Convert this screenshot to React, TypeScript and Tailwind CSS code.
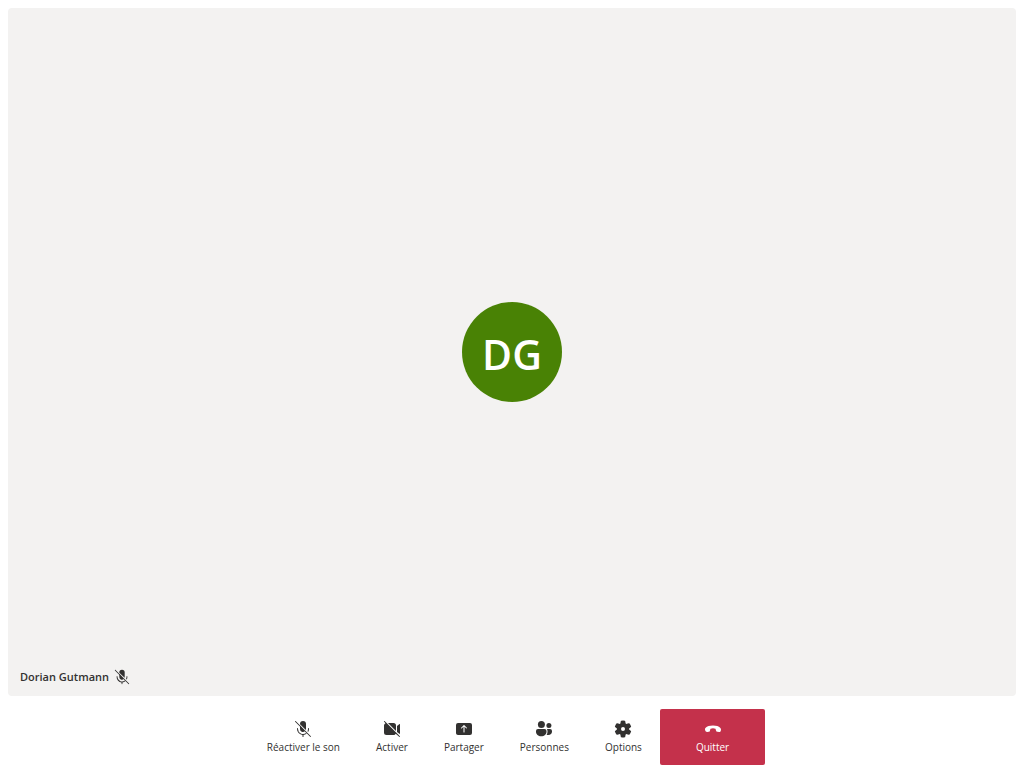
import type { ReactNode } from 'react';

function MicOffIcon({ className }: { className: string }) {
  return (
    <svg viewBox="0 0 20 20" className={className} fill="currentColor" aria-hidden="true">
      <path d="M13 10c0 .3-.05.62-.13.9L7 5.2V5a3 3 0 0 1 6 0v5Z" />
      <path d="M7 6.6V10a3 3 0 0 0 4.9 2.33L7 6.6Z" />
      <path d="M5 9.5a.5.5 0 0 0-1 0v.5a6 6 0 0 0 5.5 5.98v1.52a.5.5 0 0 0 1 0v-1.52a5.97 5.97 0 0 0 3.26-1.38l-.7-.7A5 5 0 0 1 5 10v-.5ZM15.2 12.9l-.74-.74c.35-.64.54-1.37.54-2.16v-.5a.5.5 0 0 1 1 0v.5c0 1.06-.3 2.06-.8 2.9Z" />
      <path d="M2.15 2.15c.2-.2.5-.2.7 0l15 15a.5.5 0 0 1-.7.7l-15-15a.5.5 0 0 1 0-.7Z" />
    </svg>
  );
}

function CameraOffIcon() {
  return (
    <svg viewBox="0 0 20 20" className="size-5" fill="currentColor" aria-hidden="true">
      <path d="M2.85 2.15a.5.5 0 1 0-.7.7l1.34 1.35A2.5 2.5 0 0 0 2 6.5v7A2.5 2.5 0 0 0 4.5 16h7c.96 0 1.8-.54 2.22-1.34l3.43 3.2a.5.5 0 0 0 .7-.71l-15-15Z" />
      <path d="M14 12.02 5.98 4h5.52A2.5 2.5 0 0 1 14 6.5v5.52Zm3.7 3L15 13.02V6.93l2.2-1.8a.5.5 0 0 1 .8.4v8.99c0 .2-.12.4-.3.5Z" />
    </svg>
  );
}

function ShareIcon() {
  return (
    <svg viewBox="0 0 20 20" className="size-5" fill="currentColor" aria-hidden="true">
      <path
        fillRule="evenodd"
        d="M4 4a2 2 0 0 0-2 2v8c0 1.1.9 2 2 2h12a2 2 0 0 0 2-2V6a2 2 0 0 0-2-2H4Zm6 9.5a.5.5 0 0 1-.5-.5V7.7L7.85 9.35a.5.5 0 1 1-.7-.7l2.5-2.5c.2-.2.5-.2.7 0l2.5 2.5a.5.5 0 0 1-.7.7L10.5 7.7V13a.5.5 0 0 1-.5.5Z"
      />
    </svg>
  );
}

function PeopleIcon() {
  return (
    <svg viewBox="0 0 20 20" className="size-5" fill="currentColor" aria-hidden="true">
      <circle cx="7.4" cy="5.4" r="3.5" />
      <circle cx="14.9" cy="6.6" r="2.5" />
      <path d="M4 10a2 2 0 0 0-2 2v.7c0 2.5 2.2 4.5 5.25 4.5s5.25-2 5.25-4.5V12a2 2 0 0 0-2-2H4Z" />
      <path d="M12.9 10c.4.55.6 1.24.6 2v.7c0 1.3-.33 2.3-.9 3.1.5.15 1.1.2 1.7.2 2.3 0 3.7-1.5 3.7-3.5V12a2 2 0 0 0-2-2h-3.1Z" />
    </svg>
  );
}

function SettingsIcon() {
  return (
    <svg viewBox="0 0 20 20" className="size-5" fill="currentColor" aria-hidden="true">
      <path
        fillRule="evenodd"
        d="M1.91 7.38A8.5 8.5 0 0 1 3.7 4.3a.5.5 0 0 1 .54-.13l1.92.68a1 1 0 0 0 1.32-.76l.36-2a.5.5 0 0 1 .4-.4 8.53 8.53 0 0 1 3.55 0c.2.04.35.2.38.4l.37 2a1 1 0 0 0 1.32.76l1.92-.68a.5.5 0 0 1 .54.13 8.5 8.5 0 0 1 1.78 3.08c.06.2 0 .4-.15.54l-1.56 1.32a1 1 0 0 0 0 1.52l1.56 1.32a.5.5 0 0 1 .15.54 8.5 8.5 0 0 1-1.78 3.08.5.5 0 0 1-.54.13l-1.92-.68a1 1 0 0 0-1.32.76l-.37 2a.5.5 0 0 1-.38.4 8.53 8.53 0 0 1-3.56 0 .5.5 0 0 1-.39-.4l-.36-2a1 1 0 0 0-1.32-.76l-1.92.68a.5.5 0 0 1-.54-.13 8.5 8.5 0 0 1-1.78-3.08.5.5 0 0 1 .15-.54l1.56-1.32a1 1 0 0 0 0-1.52L2.06 7.92a.5.5 0 0 1-.15-.54ZM8 10a2 2 0 1 0 4 0 2 2 0 0 0-4 0Z"
      />
    </svg>
  );
}

function HangUpIcon() {
  return (
    <svg viewBox="0 0 20 20" className="size-5" fill="currentColor" aria-hidden="true">
      <path d="m17.96 10.94-.16.83c-.15.78-.87 1.29-1.7 1.21l-1.63-.16c-.72-.07-1.25-.59-1.47-1.33-.3-1-.5-1.75-.5-1.75A6.5 6.5 0 0 0 10 9.25a6.3 6.3 0 0 0-2.5.49s-.21.75-.5 1.75c-.2.67-.5 1.26-1.2 1.33l-1.63.16c-.81.08-1.6-.43-1.83-1.2l-.25-.84c-.25-.83-.04-1.68.56-2.23C4.08 7.39 6.59 6.5 9.99 6.5c3.4 0 5.75.89 7.16 2.2.59.56.96 1.41.81 2.24Z" />
    </svg>
  );
}

const actions: { label: string; icon: ReactNode }[] = [
  { label: 'Réactiver le son', icon: <MicOffIcon className="size-5" /> },
  { label: 'Activer', icon: <CameraOffIcon /> },
  { label: 'Partager', icon: <ShareIcon /> },
  { label: 'Personnes', icon: <PeopleIcon /> },
  { label: 'Options', icon: <SettingsIcon /> },
];

export default function App() {
  return (
    <div className="flex min-h-screen flex-col bg-white font-['Segoe_UI','Open_Sans',sans-serif] text-[#323130]">
      <main className="flex flex-1 p-2 pb-0">
        <section
          aria-label="Dorian Gutmann"
          className="grid flex-1 grid-rows-[1fr_auto_1fr] rounded-sm bg-[#f3f2f1]"
        >
          <div className="row-start-2 flex size-25 items-center justify-center justify-self-center rounded-full bg-[#498205] pt-1 text-[41px] leading-none font-semibold text-white">
            DG
          </div>
          <div className="row-start-3 flex items-center gap-1 self-end px-3 pb-2.5 text-[11px] leading-[18px] font-semibold">
            <span>Dorian Gutmann</span>
            <MicOffIcon className="size-[18px]" />
          </div>
        </section>
      </main>
      <footer className="flex justify-center pt-[13px] pr-2.5 pb-[3px]">
        {actions.map(({ label, icon }) => (
          <button
            key={label}
            type="button"
            className="flex h-14 flex-col items-center justify-center px-[18px] text-[10px] leading-4"
          >
            {icon}
            <span>{label}</span>
          </button>
        ))}
        <button
          type="button"
          className="flex h-14 flex-col items-center justify-center rounded-xs bg-[#c4314b] px-9 text-[10px] leading-4 text-white"
        >
          <HangUpIcon />
          <span>Quitter</span>
        </button>
      </footer>
    </div>
  );
}
